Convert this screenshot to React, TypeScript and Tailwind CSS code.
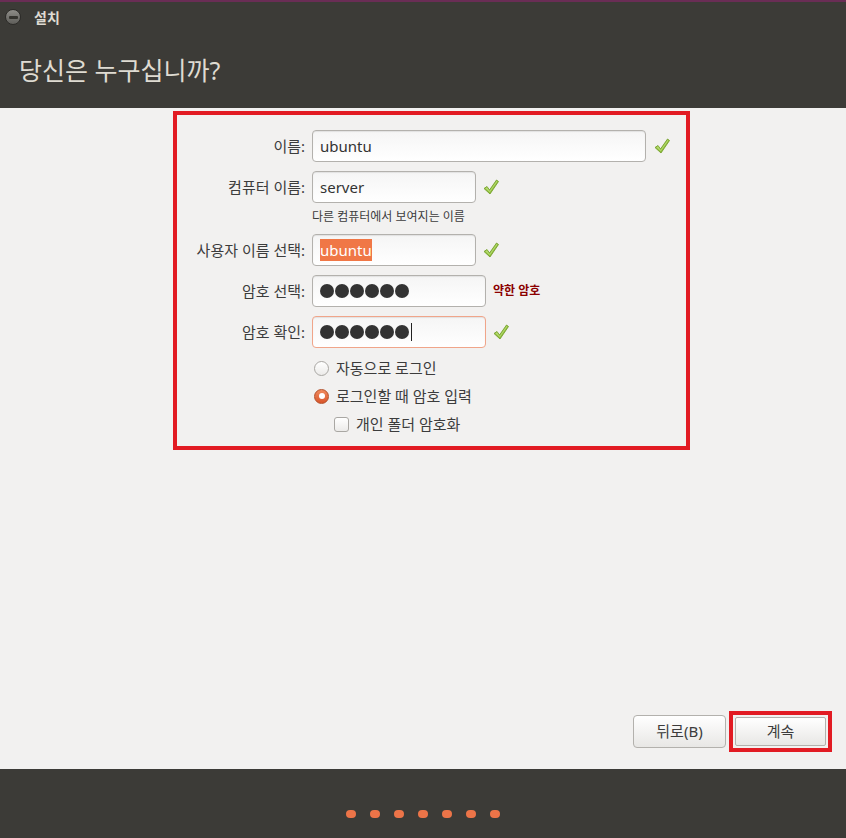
import type { ReactNode } from "react";

const font = { fontFamily: '"Noto Sans", "Noto Sans CJK KR", sans-serif' };

function Check() {
  return (
    <svg width="18" height="18" viewBox="0 0 18 18" className="shrink-0">
      <path
        d="M2 10.5 L5 8.5 L7.5 12 L14.5 2 L16.5 3.5 L8 16 Z"
        fill="#8fbf3a"
        stroke="#6e9a25"
        strokeWidth="0.8"
        strokeLinejoin="round"
      />
      <path d="M3.2 10.3 L5 9.2 L7.6 13 L14.6 3 L15.4 3.6 L7.8 14.2 Z" fill="#c6e58a" opacity="0.7" />
    </svg>
  );
}

function Field({
  label,
  width,
  children,
  focused,
  after,
}: {
  label: string;
  width: string;
  children: ReactNode;
  focused?: boolean;
  after?: ReactNode;
}) {
  return (
    <div className="flex h-8 items-center">
      <span className="w-[128px] shrink-0 text-right text-[15px] text-[#3c3c3c]">{label}</span>
      <div
        className={`ml-[7px] flex h-8 items-center rounded-[4px] border bg-gradient-to-b from-[#f5f5f5] to-white px-[7px] text-[15px] text-[#333] shadow-[inset_0_1px_1px_rgba(0,0,0,0.08)] ${width} ${
          focused ? "border-[#f0a58a]" : "border-[#b3b1ad]"
        }`}
      >
        {children}
      </div>
      {after}
    </div>
  );
}

function Dots({ cursor }: { cursor?: boolean }) {
  return (
    <span className="flex items-center gap-[1px]">
      {[0, 1, 2, 3, 4, 5].map((i) => (
        <span key={i} className="h-[14px] w-[14px] rounded-full bg-[#333]" />
      ))}
      {cursor && <span className="ml-[1px] h-[18px] w-[1px] bg-[#222]" />}
    </span>
  );
}

export default function App() {
  return (
    <div className="flex h-[838px] w-[846px] flex-col bg-[#f2f1f0]" style={font}>
      <div className="h-[2px] bg-[#6a2d55]" />
      <div className="h-[106px] bg-[#3c3b37]">
        <div className="flex h-[30px] items-center">
          <span className="ml-[5px] flex h-[16px] w-[16px] items-center justify-center rounded-full border border-[#2c2b28] bg-gradient-to-b from-[#8e8d88] to-[#5f5e5a]">
            <span className="h-[3px] w-[9px] rounded-[1px] bg-[#35342f]" />
          </span>
          <span className="ml-[13px] text-[14px] font-bold text-[#dfdbd2]">설치</span>
        </div>
        <div className="ml-[19px] mt-[23px] text-[25px] leading-[30px] text-[#dfdbd2]">당신은 누구십니까?</div>
      </div>

      <div className="relative flex-1">
        <div className="ml-[173px] mt-[3px] h-[339px] w-[517px] border-4 border-[#e21b23] pt-[15px]">
          <div className="flex flex-col">
            <Field label="이름:" width="w-[334px]" after={<span className="ml-[7px]"><Check /></span>}>
              ubuntu
            </Field>
            <div className="mt-[9px]">
              <Field label="컴퓨터 이름:" width="w-[164px]" after={<span className="ml-[6px]"><Check /></span>}>
                server
              </Field>
            </div>
            <div className="ml-[135px] mt-[6px] text-[12px] leading-[16px] text-[#3c3c3c]">다른 컴퓨터에서 보여지는 이름</div>
            <div className="mt-[9px]">
              <Field label="사용자 이름 선택:" width="w-[164px]" after={<span className="ml-[6px]"><Check /></span>}>
                <span className="bg-[#f07746] text-white">ubuntu</span>
              </Field>
            </div>
            <div className="mt-[9px]">
              <Field
                label="암호 선택:"
                width="w-[174px]"
                after={<span className="ml-[7px] text-[12px] font-bold text-[#8b0000]">약한 암호</span>}
              >
                <Dots />
              </Field>
            </div>
            <div className="mt-[9px]">
              <Field label="암호 확인:" width="w-[174px]" focused after={<span className="ml-[6px]"><Check /></span>}>
                <Dots cursor />
              </Field>
            </div>
            <div className="ml-[137px] mt-[11px] flex h-[18px] items-center gap-[7px] text-[15px] text-[#3c3c3c]">
              <span className="h-[15px] w-[15px] rounded-full border border-[#a9a7a3] bg-gradient-to-b from-white to-[#ecebe9]" />
              자동으로 로그인
            </div>
            <div className="ml-[137px] mt-[10px] flex h-[18px] items-center gap-[7px] text-[15px] text-[#3c3c3c]">
              <span className="flex h-[15px] w-[15px] items-center justify-center rounded-full border border-[#b3502a] bg-gradient-to-b from-[#f08a5d] to-[#d9552a]">
                <span className="h-[6px] w-[6px] rounded-full bg-white" />
              </span>
              로그인할 때 암호 입력
            </div>
            <div className="ml-[157px] mt-[10px] flex h-[18px] items-center gap-[7px] text-[15px] text-[#3c3c3c]">
              <span className="h-[15px] w-[15px] rounded-[3px] border border-[#a9a7a3] bg-gradient-to-b from-white to-[#ecebe9]" />
              개인 폴더 암호화
            </div>
          </div>
        </div>

        <div className="absolute bottom-[17px] right-[14px] flex items-center gap-[3px]">
          <button className="h-[33px] w-[93px] rounded-[4px] border border-[#b3b1ad] bg-gradient-to-b from-white to-[#e8e7e5] text-[15px] text-[#3c3c3c]">
            뒤로(B)
          </button>
          <div className="border-4 border-[#e21b23] p-[2px]">
            <button className="h-[29px] w-[91px] rounded-[2px] border border-[#b3b1ad] bg-gradient-to-b from-white to-[#e8e7e5] text-[15px] text-[#3c3c3c]">
              계속
            </button>
          </div>
        </div>
      </div>

      <div className="flex h-[69px] items-center justify-center gap-[14px] bg-[#3c3b37] pt-[20px]">
        {[0, 1, 2, 3, 4, 5, 6].map((i) => (
          <span key={i} className="h-[8px] w-[10px] rounded-[4px] bg-[#ec7448]" />
        ))}
      </div>
    </div>
  );
}
